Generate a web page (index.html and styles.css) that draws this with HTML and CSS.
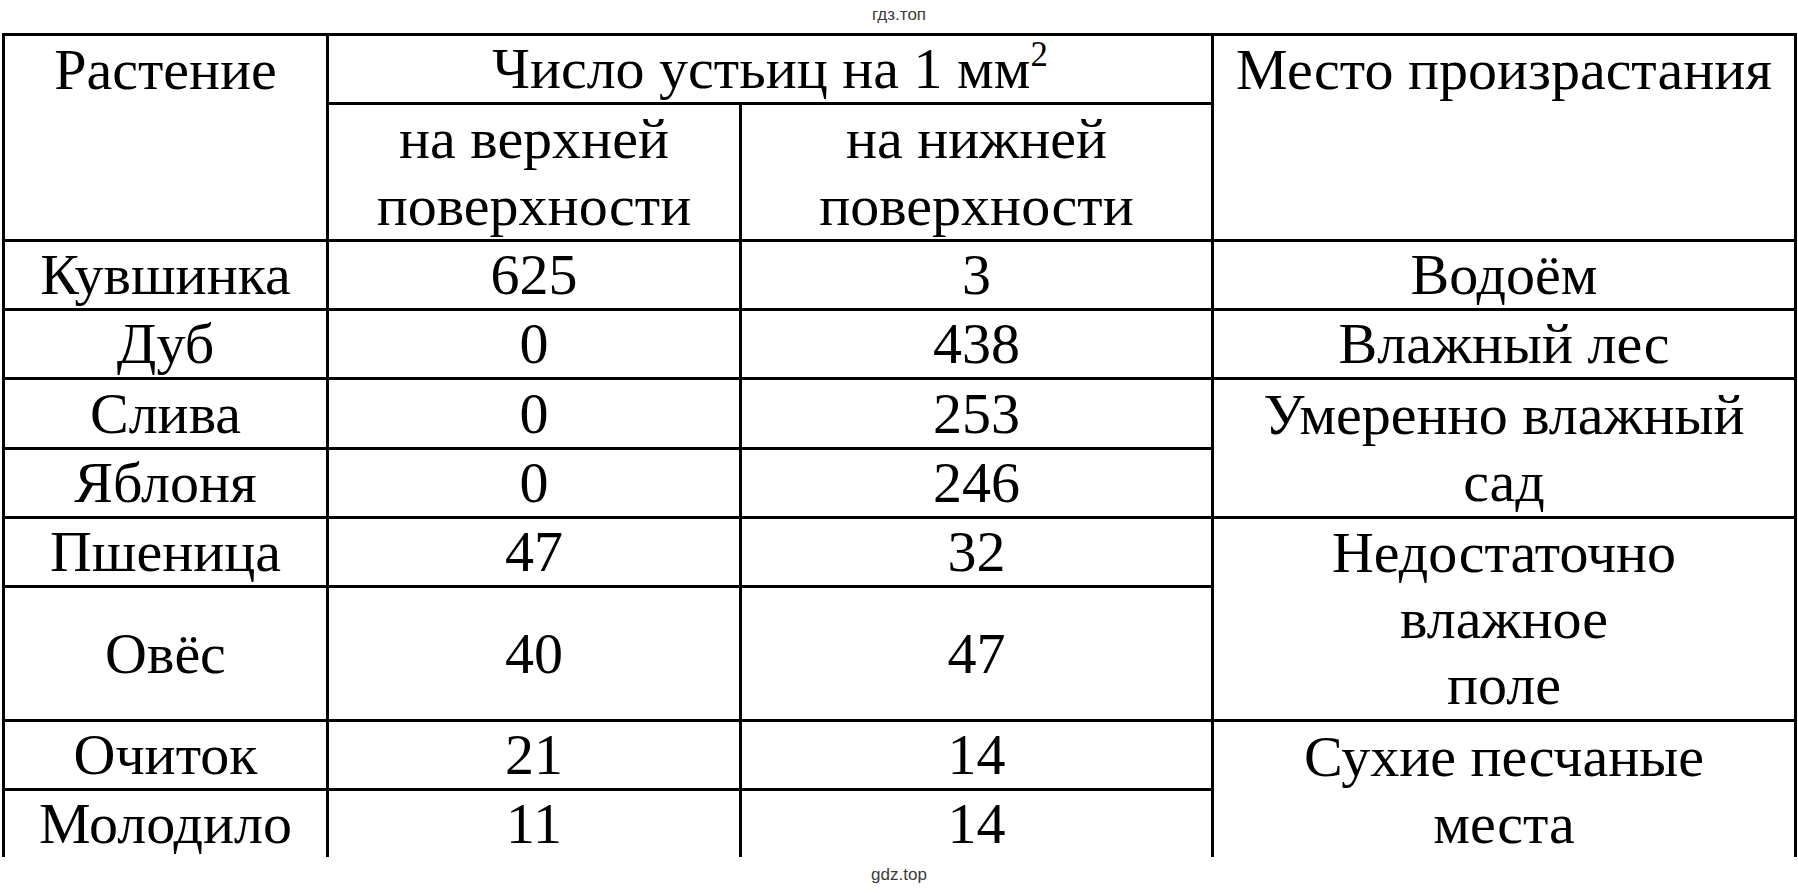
FILE: index.html
```html
<!DOCTYPE html>
<html lang="ru">
<head>
<meta charset="utf-8">
<title>Число устьиц</title>
<link rel="stylesheet" href="styles.css">
</head>
<body>
<div class="page">
  <div class="wm wm-top">гдз.топ</div>
  <table class="grid">
    <colgroup>
      <col class="c1">
      <col class="c2">
      <col class="c3">
      <col class="c4">
    </colgroup>
    <thead>
      <tr class="h1">
        <th rowspan="2" class="top">Растение</th>
        <th colspan="2">Число устьиц на 1 мм<sup>2</sup></th>
        <th rowspan="2" class="top">Место произрастания</th>
      </tr>
      <tr class="h2">
        <th class="multi">на верхней<br>поверхности</th>
        <th class="multi">на нижней<br>поверхности</th>
      </tr>
    </thead>
    <tbody>
      <tr class="r"><td>Кувшинка</td><td>625</td><td>3</td><td>Водоём</td></tr>
      <tr class="r"><td>Дуб</td><td>0</td><td>438</td><td>Влажный лес</td></tr>
      <tr class="r7"><td>Слива</td><td>0</td><td>253</td><td rowspan="2" class="multi">Умеренно влажный<br>сад</td></tr>
      <tr class="r"><td>Яблоня</td><td>0</td><td>246</td></tr>
      <tr class="r"><td>Пшеница</td><td>47</td><td>32</td><td rowspan="2">Недостаточно<br>влажное<br>поле</td></tr>
      <tr class="tall"><td>Овёс</td><td>40</td><td>47</td></tr>
      <tr class="r"><td>Очиток</td><td>21</td><td>14</td><td rowspan="2" class="open multi">Сухие песчаные<br>места</td></tr>
      <tr class="last"><td>Молодило</td><td>11</td><td>14</td></tr>
    </tbody>
  </table>
  <div class="wm wm-bottom">gdz.top</div>
</div>
</body>
</html>
```

FILE: styles.css
```css
html, body {
  margin: 0;
  padding: 0;
  background: #fff;
}

.page {
  width: 1798px;
  height: 893px;
  overflow: hidden;
  display: flex;
  flex-direction: column;
}

.wm {
  font-family: "Liberation Sans", Arial, sans-serif;
  font-size: 17px;
  color: #3a3a3a;
  text-align: center;
}

.wm-top {
  height: 33px;
  line-height: 30px;
}

.wm-bottom {
  padding-top: 6px;
  line-height: 24px;
}

.grid {
  margin-left: 2px;
  width: 1795px;
  table-layout: fixed;
  border-collapse: collapse;
  font-family: "Liberation Serif", "Times New Roman", serif;
  font-size: 58px;
  line-height: 66px;
  color: #000;
}

.c1 { width: 324px; }
.c2 { width: 413px; }
.c3 { width: 472px; }
.c4 { width: 583px; }

.grid th,
.grid td {
  border: 3px solid #000;
  padding: 0;
  text-align: center;
  vertical-align: middle;
  font-weight: normal;
  white-space: nowrap;
}

.grid .multi {
  line-height: 67px;
}

.grid th.top {
  vertical-align: top;
  padding-top: 1px;
}

.grid sup {
  font-size: 0.6em;
  line-height: 0;
  vertical-align: 0.62em;
}

.h1 { height: 69px; }
.h2 { height: 136px; }
.r { height: 69px; }
.r7 { height: 70px; }
.tall { height: 134px; }
.last { height: 67px; }

.grid .last td,
.grid td.open {
  border-bottom: none;
}
```
